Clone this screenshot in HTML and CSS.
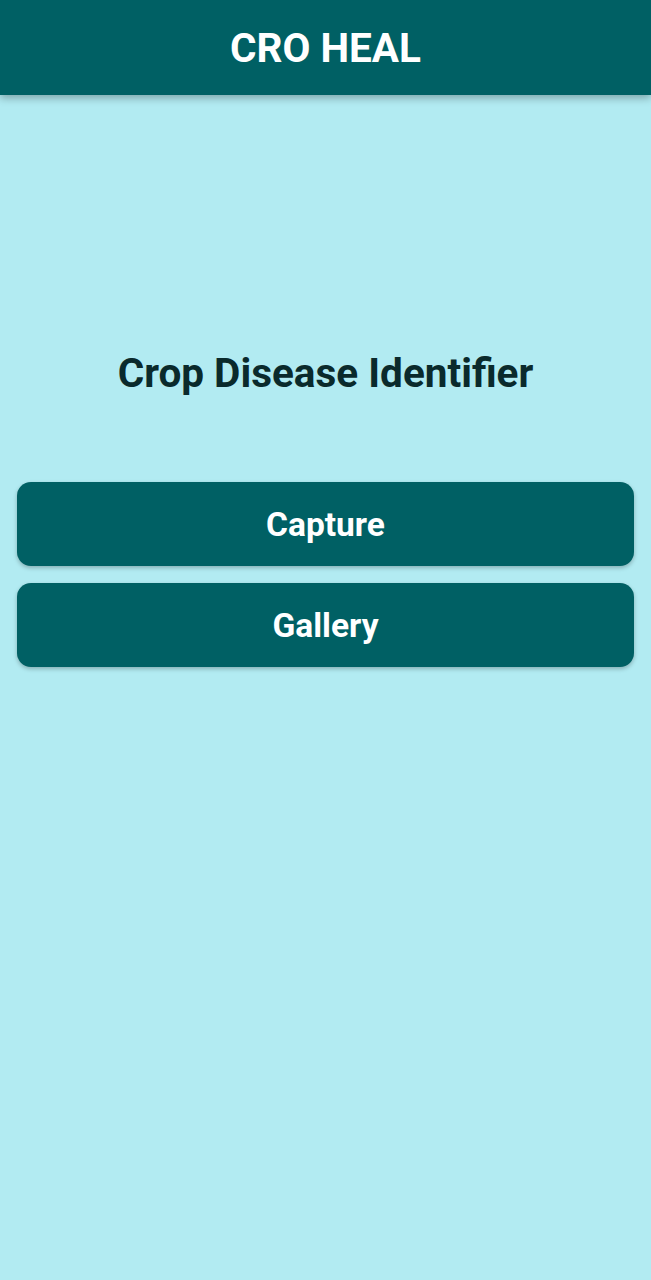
FILE: index.html
```html
<!DOCTYPE html>
<html>
<head>
<meta charset="utf-8">
<link rel="stylesheet" href="styles.css">
</head>
<body>
<header class="appbar"><h1 class="appbar-title">CRO HEAL</h1></header>
<main class="content">
  <h2 class="heading">Crop Disease Identifier</h2>
  <div class="actions">
    <button class="btn">Capture</button>
    <button class="btn">Gallery</button>
  </div>
</main>
</body>
</html>
```
FILE: styles.css
```css
html, body {
  margin: 0;
  padding: 0;
  background: #b2ebf2;
  font-family: Roboto, "Noto Sans", sans-serif;
  height: 100%;
}
.appbar {
  height: 95px;
  background: #006064;
  display: flex;
  align-items: center;
  justify-content: center;
  box-shadow: 0 3px 8px rgba(0, 0, 0, 0.3);
  position: relative;
  z-index: 1;
}
.appbar-title {
  margin: 0;
  color: #ffffff;
  font-size: 40.5px;
  font-weight: 700;
}
.content {
  display: flex;
  flex-direction: column;
  padding: 0 17px;
}
.heading {
  margin: 250px 0 0;
  text-align: center;
  font-size: 40.5px;
  font-weight: 700;
  color: #0a2a2c;
  line-height: 56px;
}
.actions {
  margin-top: 81px;
  display: flex;
  flex-direction: column;
  gap: 17px;
}
.btn {
  height: 84px;
  border: none;
  border-radius: 14px;
  background: #006064;
  color: #ffffff;
  font-family: Roboto, "Noto Sans", sans-serif;
  font-size: 33.5px;
  font-weight: 700;
  box-shadow: 0 2px 4px rgba(0, 0, 0, 0.25);
}
```
